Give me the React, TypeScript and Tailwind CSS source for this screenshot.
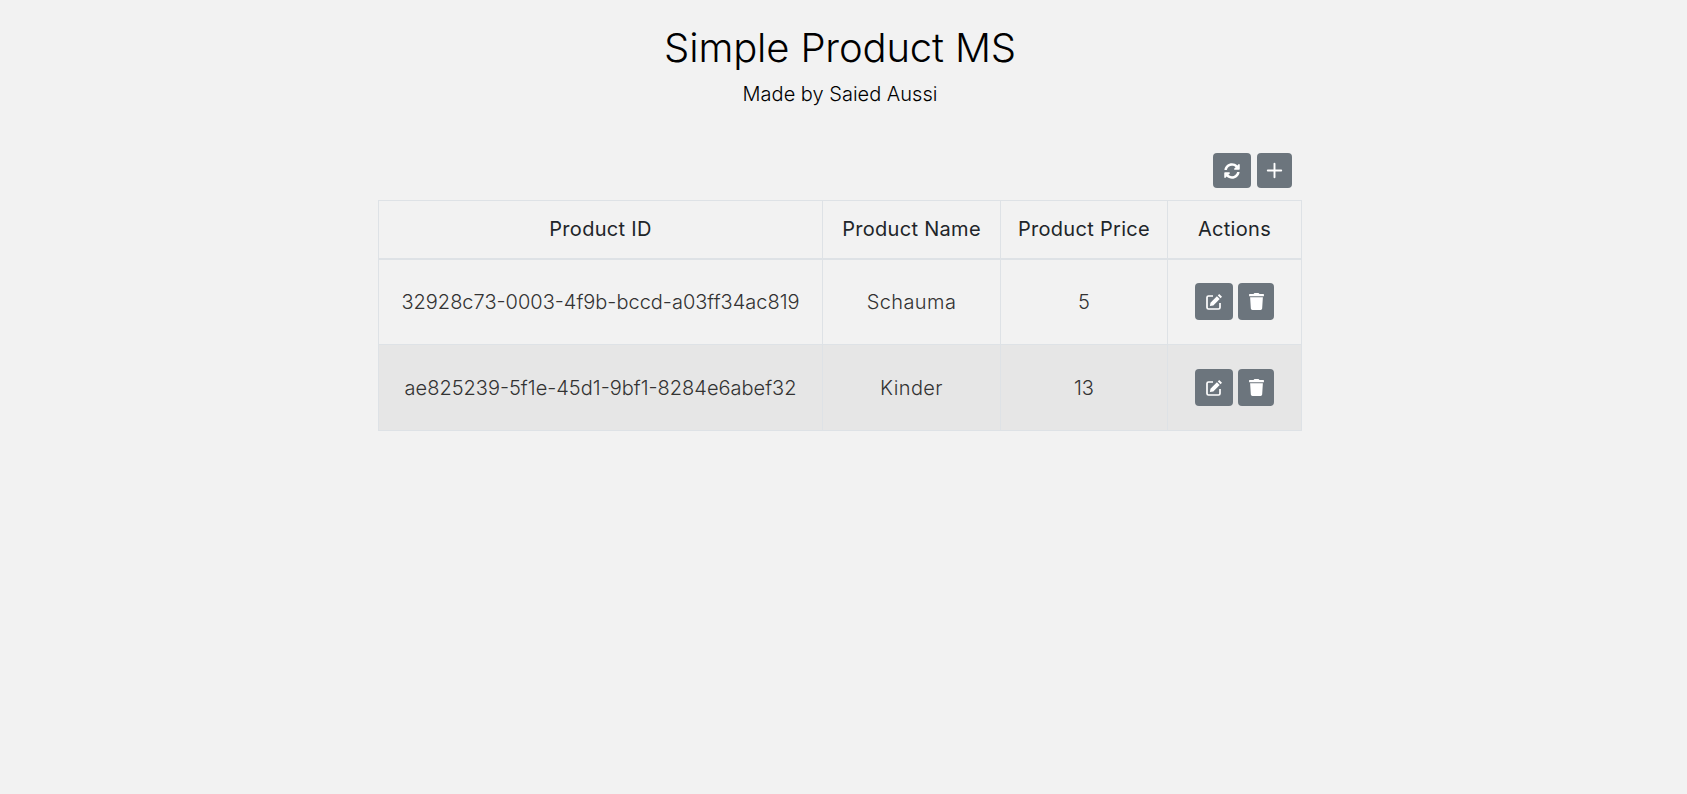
import React from 'react';
import { FaSyncAlt, FaTrash } from 'react-icons/fa';
import { Plus } from 'lucide-react';

const PRODUCTS = [
  { id: '32928c73-0003-4f9b-bccd-a03ff34ac819', name: 'Schauma', price: 5 },
  { id: 'ae825239-5f1e-45d1-9bf1-8284e6abef32', name: 'Kinder', price: 13 },
];

// outlined box with a solid pencil, none of the packs has quite this one
const EditIcon = () => (
  <svg viewBox="0 0 18 18" className="h-[18px] w-[18px]">
    <path
      d="M8 3H3.5A1.5 1.5 0 0 0 2 4.5v10A1.5 1.5 0 0 0 3.5 16h10a1.5 1.5 0 0 0 1.5-1.5V10"
      fill="none"
      stroke="currentColor"
      strokeWidth="1.7"
    />
    <path d="M14.2 1 17 3.8l-1.4 1.4-2.8-2.8z" fill="currentColor" />
    <path d="M11.9 3.3l2.8 2.8-6.4 6.4-3.4.6.6-3.4z" fill="currentColor" />
  </svg>
);

const App: React.FC = () => {
  return (
    <div className="min-h-[794px] bg-[#f2f2f2] pr-[7px] font-['Inter','Liberation_Sans',sans-serif] text-[#212529]">
      <header className="pt-[24px] text-center text-black">
        <h1 className="text-[40px] font-light leading-[48px] tracking-[-0.15px]">Simple Product MS</h1>
        <p className="mt-[8px] text-[20px] font-light leading-[28px]">Made by Saied Aussi</p>
      </header>

      <main className="mx-auto mt-[45px] w-[924px]">
        <div className="flex justify-end gap-[6px] pr-[10px]">
          <button className="flex h-[35px] w-[38px] items-center justify-center rounded-[4px] bg-[#6c757d] text-white">
            <FaSyncAlt className="h-[16px] w-[16px]" />
          </button>
          <button className="flex h-[35px] w-[35px] items-center justify-center rounded-[4px] bg-[#6c757d] text-white">
            <Plus className="h-[23px] w-[23px]" strokeWidth={2} />
          </button>
        </div>

        <table className="mt-[12px] w-[923px] table-fixed border-collapse text-center">
          <colgroup>
            <col className="w-[444px]" />
            <col className="w-[178px]" />
            <col className="w-[167px]" />
            <col className="w-[134px]" />
          </colgroup>
          <thead>
            <tr className="h-[58px] text-[20px] font-normal tracking-[0.3px]">
              <th className="border border-b-2 border-[#dee2e6] font-normal">Product ID</th>
              <th className="border border-b-2 border-[#dee2e6] font-normal">Product Name</th>
              <th className="border border-b-2 border-[#dee2e6] font-normal">Product Price</th>
              <th className="border border-b-2 border-[#dee2e6] font-normal">Actions</th>
            </tr>
          </thead>
          <tbody className="text-[20px] font-light text-[#333]">
            {PRODUCTS.map((p, i) => (
              <tr key={p.id} className={`h-[86px] ${i % 2 === 1 ? 'bg-[#e6e6e6]' : ''}`}>
                <td className="whitespace-nowrap border border-[#dee2e6]">{p.id}</td>
                <td className="border border-[#dee2e6] tracking-[0.4px]">{p.name}</td>
                <td className="border border-[#dee2e6]">{p.price}</td>
                <td className="border border-[#dee2e6]">
                  <div className="flex justify-center gap-[5px]">
                    <button className="flex h-[37px] w-[38px] items-center justify-center rounded-[4px] bg-[#6c757d] text-white">
                      <EditIcon />
                    </button>
                    <button className="flex h-[37px] w-[36px] items-center justify-center rounded-[4px] bg-[#6c757d] text-white">
                      <FaTrash className="h-[17px] w-[17px]" />
                    </button>
                  </div>
                </td>
              </tr>
            ))}
          </tbody>
        </table>
      </main>
    </div>
  );
};

export default App;
